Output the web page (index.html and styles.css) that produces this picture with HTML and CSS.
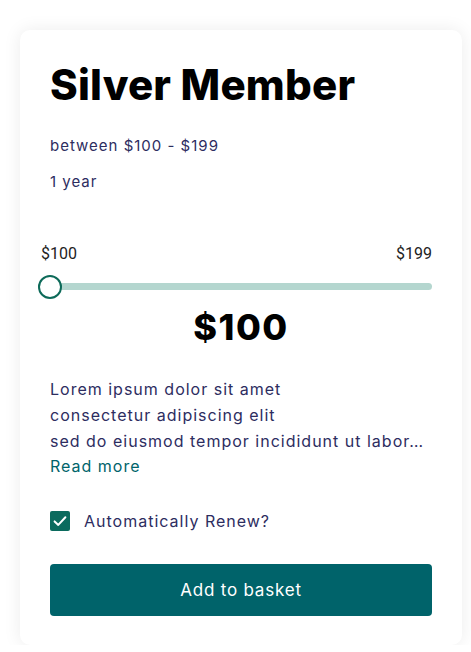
FILE: index.html
```html
<!DOCTYPE html>
<html lang="en">
<head>
    <meta charset="UTF-8">
    <meta name="viewport" content="width=device-width, initial-scale=1.0">
    <title>Silver Member</title>
    <link rel="stylesheet" href="styles.css">
</head>
<body>

    <div class="card">
        <h1 class="title">Silver Member</h1>
        <p class="range-text">between $100 - $199</p>
        <p class="term">1 year</p>

        <div class="slider-wrap">
            <div class="slider-labels">
                <span>$100</span>
                <span>$199</span>
            </div>
            <input type="range" class="slider" id="slider" min="100" max="199" value="100">
        </div>

        <div class="price" id="price">$100</div>

        <p class="description">
            Lorem ipsum dolor sit amet<br>
            consectetur adipiscing elit<br>
            sed do eiusmod tempor incididunt ut labor…<br>
            <a href="#" class="read-more">Read more</a>
        </p>

        <label class="renew">
            <input type="checkbox" class="renew-input" id="renew" checked>
            <span class="renew-box">
                <svg width="20" height="20" viewBox="0 0 20 20">
                    <polyline points="4.6,10.4 8.3,13.9 15.4,6.2" fill="none" stroke="#fff" stroke-width="2" stroke-linecap="round" stroke-linejoin="round"/>
                </svg>
            </span>
            <span>Automatically Renew?</span>
        </label>

        <button class="basket-button">Add to basket</button>
    </div>

    <script>
        let slider = document.getElementById('slider');
        let price = document.getElementById('price');

        slider.addEventListener('input', function () {
            price.textContent = '$' + slider.value;
        });
    </script>

</body>
</html>
```

FILE: styles.css
```css
body {
    font-family: Inter, "Noto Sans", sans-serif;
    margin: 0;
    padding: 30px 0 0 20px;
    background-color: #fff;
    color: #2d2d5f;
}
.card {
    width: 442px;
    box-sizing: border-box;
    padding: 30px 30px 29px;
    background-color: #fff;
    border-radius: 10px;
    box-shadow: 0px 0px 18px rgba(0, 0, 0, 0.08);
}
.title {
    margin: 0;
    font-size: 42px;
    line-height: 1.2;
    font-weight: 800;
    color: #000;
    letter-spacing: 0.2px;
}
.range-text {
    margin: 25px 0 0;
    font-size: 15px;
    line-height: 22px;
    letter-spacing: 1px;
}
.term {
    margin: 14px 0 0;
    font-size: 15px;
    line-height: 22px;
    letter-spacing: 1px;
}
.slider-wrap {
    margin: 51px 0 0 -12px;
}
.slider-labels {
    display: flex;
    justify-content: space-between;
    padding-left: 3px;
    font-family: Roboto, sans-serif;
    font-size: 16px;
    line-height: 19px;
    color: #222;
}
.slider {
    -webkit-appearance: none;
    appearance: none;
    display: block;
    width: 100%;
    height: 7px;
    margin: 20px 0 0;
    background-color: #b4d6cf;
    border-radius: 4px;
    outline: none;
}
.slider::-webkit-slider-thumb {
    -webkit-appearance: none;
    width: 24px;
    height: 24px;
    box-sizing: border-box;
    border-radius: 50%;
    background-color: #fff;
    border: 2.5px solid #0d6a59;
    cursor: pointer;
}
.price {
    margin-top: 16px;
    text-align: center;
    font-size: 36px;
    line-height: 43px;
    font-weight: 800;
    color: #000;
    letter-spacing: 1.5px;
}
.description {
    margin: 28px 0 0;
    font-size: 16px;
    line-height: 25.6px;
    letter-spacing: 1px;
}
.read-more {
    color: #00646b;
    text-decoration: none;
}
.renew {
    display: flex;
    align-items: center;
    gap: 14px;
    margin-top: 31px;
    font-size: 16px;
    line-height: 20px;
    letter-spacing: 1px;
    cursor: pointer;
}
.renew-input {
    display: none;
}
.renew-box {
    display: flex;
    width: 20px;
    height: 20px;
    border-radius: 2px;
    background-color: #0b6b5e;
}
.basket-button {
    display: block;
    width: 100%;
    height: 52px;
    margin-top: 33px;
    border: none;
    border-radius: 4px;
    background-color: #00636a;
    color: #fff;
    font-family: Inter, sans-serif;
    font-size: 17px;
    letter-spacing: 0.8px;
    cursor: pointer;
}
```
